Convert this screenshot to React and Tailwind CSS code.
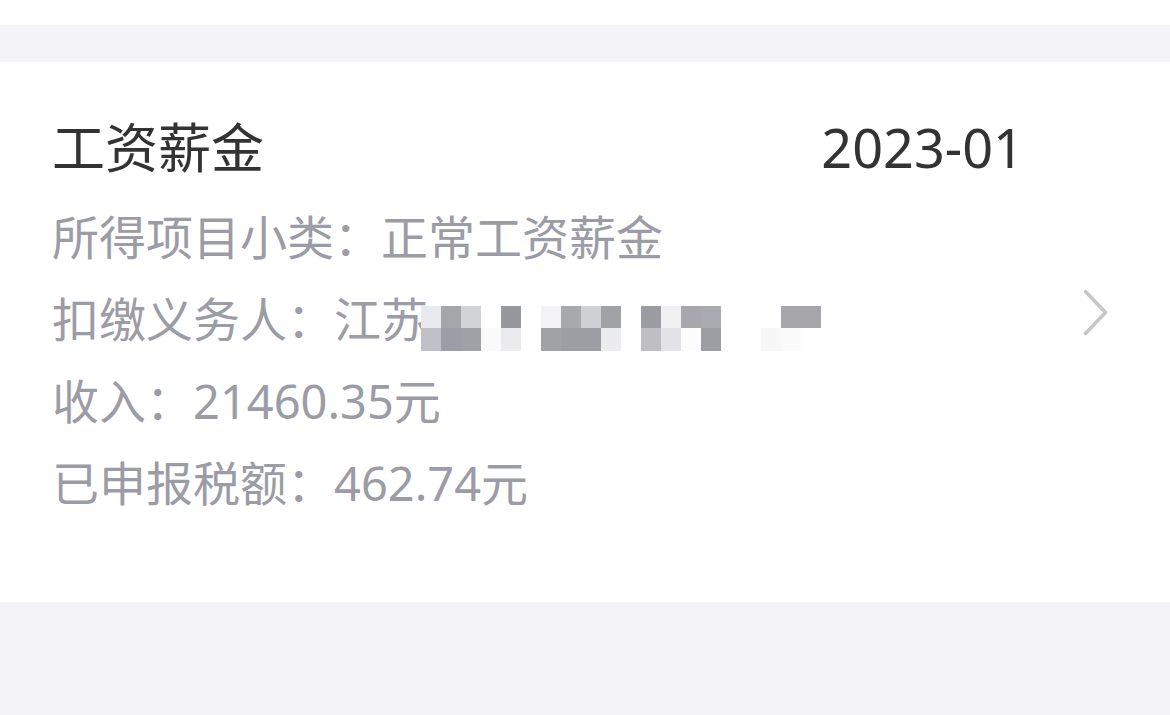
import React from 'react';

const mosaicTop = [
  '#e9eaed', '#a5a6aa', '#d2d3d6', '#ffffff', '#97989c', '#ffffff', '#f3f3f5', '#a8a9ad', '#cfd0d4', '#a1a2a6',
  '#ffffff', '#9a9ba3', '#f1f1f3', '#a7a7ad', '#a9aaaf', '#ffffff', '#ffffff', '#ffffff', '#a7a7ab', '#a7a7ab',
];
const mosaicBottom = [
  '#c0c1c8', '#9d9ea5', '#a0a1a6', '#fafafa', '#ebebee', '#ffffff', '#a0a2a4', '#9d9ea4', '#9d9ea4', '#ececee',
  '#ffffff', '#bebec4', '#e3e3e7', '#fcfcfc', '#9d9ea4', '#ffffff', '#ffffff', '#f7f7f7', '#fbfbfb', '#ffffff',
];

function Mosaic() {
  return (
    <div className="grid grid-cols-[repeat(20,20px)] grid-rows-[22px_23px] -ml-[7px] mt-[18px] bg-white">
      {[...mosaicTop, ...mosaicBottom].map((c, i) => (
        <div key={i} style={{ backgroundColor: c }} />
      ))}
    </div>
  );
}

function Chevron() {
  return (
    <svg width="28" height="50" viewBox="0 0 28 50" fill="none">
      <polyline
        points="3.5,3.5 23.5,24.5 3.5,45.5"
        stroke="#c6c6c8"
        strokeWidth="3.5"
        strokeLinecap="round"
        strokeLinejoin="round"
      />
    </svg>
  );
}

export default function App() {
  return (
    <div
      className="w-[1170px] h-[715px] bg-[#f4f4f8] flex flex-col"
      style={{ fontFamily: '"Noto Sans", "Noto Sans CJK SC", sans-serif' }}
    >
      <div className="h-[25px] bg-white" />
      <div className="h-[37px]" />
      <div className="h-[540px] bg-white flex pl-[52px] pr-[60px] pt-[47px]">
        <div className="flex-1 flex flex-col">
          <div className="flex justify-between items-baseline text-[53px] leading-[76px] text-[#333333]">
            <span>工资薪金</span>
            <span className="text-[54px] -mr-[4px]">2023-01</span>
          </div>
          <div className="mt-[10px] flex flex-col text-[47px] leading-[82px] text-[#9b9ca5]">
            <div>所得项目小类：正常工资薪金</div>
            <div className="flex items-center">
              <span>扣缴义务人：江苏</span>
              <Mosaic />
            </div>
            <div>收入：21460.35元</div>
            <div>已申报税额：462.74元</div>
          </div>
        </div>
        <div className="pl-[62px] mt-[179px]">
          <Chevron />
        </div>
      </div>
      <div className="flex-1" />
    </div>
  );
}
